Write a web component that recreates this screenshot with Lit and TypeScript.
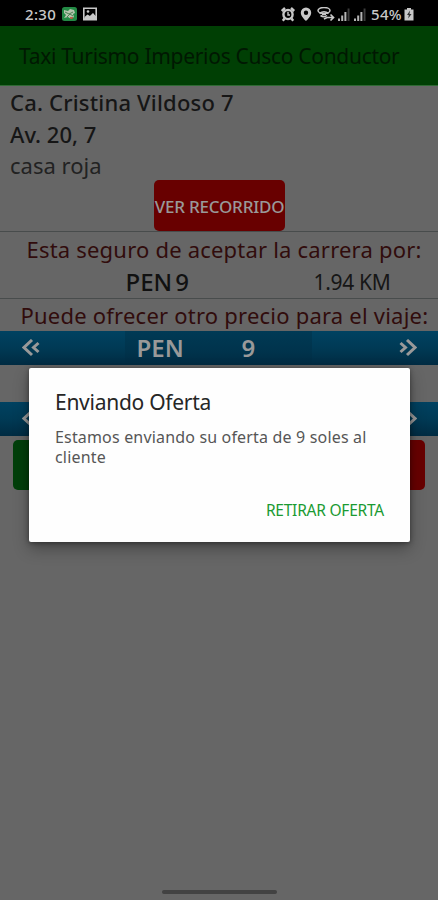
import { LitElement, html, css, svg } from "lit";
import { customElement } from "lit/decorators.js";

const chevrons = (flip: boolean) => html`<svg class="chev ${flip ? "flip" : ""}" viewBox="0 0 18 18">
  <path d="M10 1 L2 8.500 L10 16 M16.500 4 L11.500 8.500 L16.500 13" fill="none" stroke="currentColor" stroke-width="3"/>
</svg>`;

const bars = (x: number) => svg`<g transform="translate(${x} 0)">
  <path d="M0 11.500h2V14H0zM3.200 8.500h2V14h-2zM6.400 5h2v9h-2z" fill="#b4b4b4"/>
  <path d="M9.600 1.500h1.900V14H9.600z" fill="#3c3c3c"/>
</g>`;

@customElement("app-root")
export class AppRoot extends LitElement {
  static styles = css`
    :host {
      display: block;
      position: relative;
      width: 438px;
      height: 900px;
      overflow: hidden;
      background: #666;
      color: #161616;
      font-family: "Noto Sans", "Open Sans", sans-serif;
      white-space: nowrap;
    }
    .status {
      height: 26px;
      box-sizing: border-box;
      padding: 3px 24px 0 25px;
      background: #000;
      color: #c8c8c8;
      display: flex;
      align-items: center;
      font-size: 15px;
      line-height: 20px;
      font-weight: 500;
    }
    .clock { width: 36px; letter-spacing: 0.3px; margin-top: -1px; }
    .status svg { display: block; flex: none; }
    .left { width: 36px; height: 16px; }
    .right { margin-left: auto; width: 90px; height: 16px; }
    .pct { width: 33px; letter-spacing: 0.3px; margin-top: -1px; }
    .batt { width: 10px; height: 14px; margin-top: -2px; }
    .bar {
      height: 59px;
      line-height: 60px;
      padding-left: 19px;
      background: #003f04;
      color: #001802;
      font-size: 21px;
      letter-spacing: -0.3px;
    }
    .addr {
      padding: 1px 0 0 10px;
      border-top: 1px solid #2f6a34;
      font-size: 22px;
      line-height: 31.5px;
    }
    .strong { font-weight: 500; }
    .a1 { letter-spacing: 0.19px; }
    .soft { color: #222; }
    .route {
      margin: -1.5px auto 0;
      width: 131px;
      height: 51px;
      position: relative;
      left: 0.5px;
      border-radius: 5px;
      background: #680000;
      color: #999;
      font-size: 17px;
      font-weight: 500;
      letter-spacing: -0.2px;
      line-height: 53px;
      display: flex;
      justify-content: center;
    }
    .ask {
      height: 33px;
      line-height: 34px;
      border-top: 1px solid #484c4c;
      padding-left: 26.5px;
      color: #310c0c;
      font-size: 22px;
      letter-spacing: 0.2px;
    }
    .price { display: flex; height: 33px; line-height: 33px; }
    .amount {
      display: flex;
      gap: 3px;
      padding-left: 125.5px;
      width: 188px;
      font-size: 24px;
      font-weight: 500;
      color: #111;
    }
    .km { font-size: 21px; line-height: 35px; letter-spacing: -0.3px; }
    .ask.second { height: 32px; line-height: 32px; padding-left: 20.5px; letter-spacing: 0.22px; }
    .stepper {
      height: 34px;
      display: grid;
      grid-template-columns: 125px 187px 126px;
      align-items: stretch;
      background: linear-gradient(#004261, #003a55 50%, #002b42);
      color: #999;
    }
    .value {
      height: 34px;
      background: linear-gradient(#003a55, #00334c 60%, #002b42);
      display: flex;
      padding-left: 11.5px;
      font-size: 24px;
      font-weight: 600;
      line-height: 34px;
    }
    .cur { width: 105px; }
    .chev { width: 18px; height: 18px; align-self: center; margin: -1px 0 0 22px; }
    .flip { transform: scaleX(-1); justify-self: end; margin: -1px 21px 0 0; }
    .gap { height: 37px; }
    .actions { display: flex; justify-content: space-between; padding: 4px 13px 0; }
    .btn { width: 204px; height: 50px; border-radius: 5px; background: #680000; }
    .ok { background: #003f0a; }
    .dialog {
      position: absolute;
      left: 29px;
      top: 368px;
      width: 381px;
      height: 174px;
      box-sizing: border-box;
      padding: 18px 26px 0;
      border-radius: 2px;
      background: #fefefe;
      box-shadow: 0 7px 16px rgba(0, 0, 0, 0.3), 0 1px 5px rgba(0, 0, 0, 0.4);
      display: flex;
      flex-direction: column;
    }
    .title { font-size: 21px; line-height: 33px; color: #262626; letter-spacing: -0.27px; }
    .msg { margin-top: 8px; font-size: 16px; line-height: 20px; color: #565656; letter-spacing: 0.17px; }
    .withdraw {
      margin-top: 33px;
      align-self: flex-end;
      font-size: 15.5px;
      line-height: 20px;
      letter-spacing: -0.22px;
      color: #1a9a32;
    }
    .home {
      position: absolute;
      left: 162px;
      top: 890px;
      width: 115px;
      height: 4px;
      border-radius: 2px;
      background: #424242;
    }
  `;

  private stepper(value: boolean) {
    return html`<div class="stepper">
      ${chevrons(false)}
      <div class="value">${value ? html`<span class="cur">PEN</span><span>9</span>` : ""}</div>
      ${chevrons(true)}
    </div>`;
  }

  render() {
    return html`
      <div class="status">
        <span class="clock">2:30</span>
        <svg class="left" viewBox="0 0 36 16">
          <rect x="1" y="0" width="15" height="14" rx="2.500" fill="#238a45"/>
          <path d="M3 3l4 1 2-2 4 1 1 3-2 1 1 3-3 2-3-2-4 1 2-3-2-2z" fill="#b5c5ae"/>
          <path d="M4 5l4 2 4-2M6 10l3-3 3 2" stroke="#4b8051" stroke-width="1" fill="none"/>
          <path d="M9 11h3" stroke="#b6482f" stroke-width="1.500"/>
          <path fill-rule="evenodd" d="M22 .5h14v13H22zM23.600 2v9.500L26.500 8.500l2 1L32 6.500l2.400 2.500V2z" fill="#c8c8c8"/>
          <path d="M23.500 12V10l3-2.500 2.500 1.500 3-3 2.500 3v3z" fill="#c8c8c8"/>
          <circle cx="27" cy="4.500" r="1.300" fill="#c8c8c8"/>
        </svg>
        <svg class="right" viewBox="0 0 90 16">
          <g fill="none" stroke="#c8c8c8">
            <circle cx="7" cy="7.500" r="4.600" stroke-width="2.400"/>
            <path d="M.8 4L4 1M13.200 4L10 1M3.500 11.500L1.800 13.800M10.500 11.500l1.700 2.300" stroke-width="2.400"/>
            <path d="M7 4.800V8h2" stroke-width="1.400"/>
            <ellipse cx="43" cy="3.500" rx="6" ry="3" stroke-width="1.500"/>
            <path d="M38.500 6.500Q43 3 47.500 6.500M39.500 8.500Q43 11 46 8.500" stroke-width="1.600"/>
            <path d="M41 7.500h4M43 12l3-1.500M46 10.500h6.500M49.500 7.500l3 3-3 3" stroke-width="1.700"/>
          </g>
          <path fill-rule="evenodd" d="M25 .5a5.200 5.200 0 0 0-5.200 5.200C19.800 9.500 25 14 25 14s5.200-4.500 5.200-8.300A5.200 5.200 0 0 0 25 .5zm0 3a2.200 2.200 0 1 1 0 4.400 2.200 2.200 0 0 1 0-4.400z" fill="#c8c8c8"/>
          ${bars(57)}${bars(73)}
        </svg>
        <span class="pct">54%</span>
        <svg class="batt" viewBox="0 0 10 14">
          <path d="M3 1h4v1.500h2.500V13.500H.5V2.500H3z" fill="#c8c8c8"/>
          <path d="M6 3.500L3 8h1.800L4.200 11.500 7.500 7H5.500z" fill="#333"/>
        </svg>
      </div>
      <div class="bar">Taxi Turismo Imperios Cusco Conductor</div>
      <div class="addr">
        <div class="strong a1">Ca. Cristina Vildoso 7</div>
        <div class="strong a2">Av. 20, 7</div>
        <div class="soft">casa roja</div>
      </div>
      <div class="route">VER RECORRIDO</div>
      <div class="ask">Esta seguro de aceptar la carrera por:</div>
      <div class="price"><span class="amount"><span>PEN</span><span>9</span></span><span class="km">1.94 KM</span></div>
      <div class="ask second">Puede ofrecer otro precio para el viaje:</div>
      ${this.stepper(true)}
      <div class="gap"></div>
      ${this.stepper(false)}
      <div class="actions"><div class="btn ok"></div><div class="btn"></div></div>
      <div class="dialog">
        <div class="title">Enviando Oferta</div>
        <div class="msg">Estamos enviando su oferta de 9 soles al<br />cliente</div>
        <div class="withdraw">RETIRAR OFERTA</div>
      </div>
      <div class="home"></div>
    `;
  }
}
